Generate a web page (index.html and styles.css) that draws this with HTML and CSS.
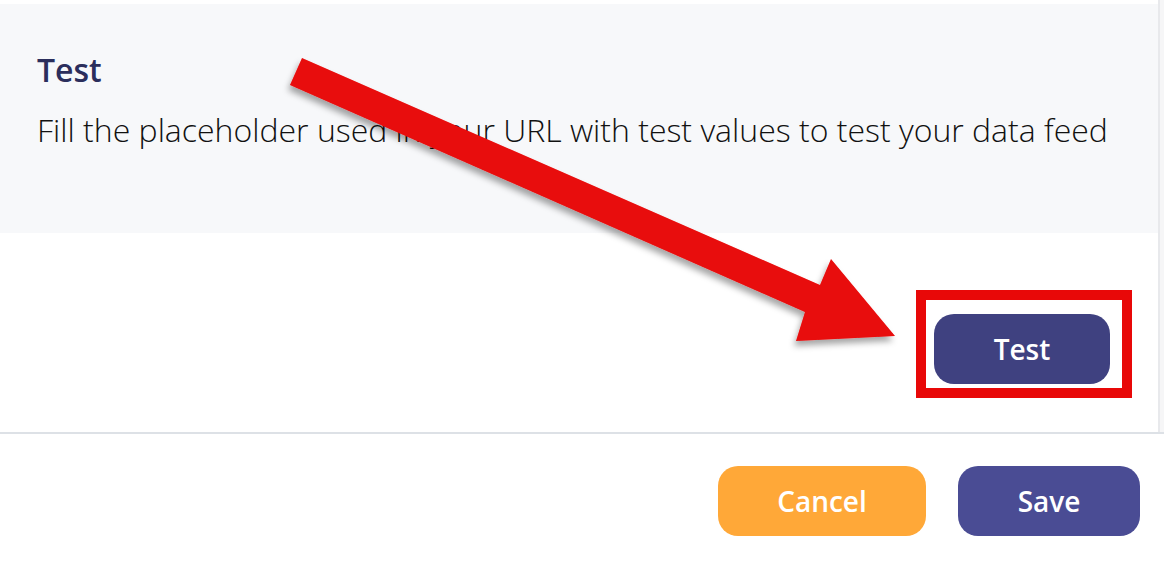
FILE: index.html
```html
<!DOCTYPE html>
<html lang="en">
<head>
<meta charset="utf-8">
<title>Test data feed</title>
<link rel="stylesheet" href="styles.css">
</head>
<body>
<div class="page">
  <div class="scroll">
    <div class="content">
      <section class="panel">
        <h2 class="panel-title">Test</h2>
        <p class="panel-text">Fill the placeholder used in your URL with test values to test your data feed</p>
      </section>
      <div class="test-row">
        <button class="btn btn-test">Test</button>
      </div>
    </div>
    <div class="scrollbar"></div>
  </div>
  <footer class="footer">
    <button class="btn btn-cancel">Cancel</button>
    <button class="btn btn-save">Save</button>
  </footer>

  <div class="highlight"></div>
  <svg class="arrow" width="1164" height="578" viewBox="0 0 1164 578" xmlns="http://www.w3.org/2000/svg">
    <defs>
      <filter id="shadow" x="-10%" y="-10%" width="130%" height="140%">
        <feDropShadow dx="-2" dy="5" stdDeviation="3" flood-color="#000" flood-opacity="0.35"/>
      </filter>
    </defs>
    <polygon filter="url(#shadow)" fill="#e80808" points="302,58 820,285 831,259 895,336 796,341 805,312 290,85"/>
  </svg>
</div>
</body>
</html>
```

FILE: styles.css
```css
* { box-sizing: border-box; }
html, body { margin: 0; padding: 0; background: #ffffff; }
body { font-family: "Open Sans", "Noto Sans", sans-serif; }

.page {
  position: relative;
  width: 1164px;
  height: 578px;
  overflow: hidden;
}

.scroll {
  display: flex;
  height: 434px;
  border-bottom: 2px solid #dde1e6;
}

.content {
  width: 1160px;
  border-right: 2px solid #e8e9ec;
  padding-top: 4px;
  display: flex;
  flex-direction: column;
}

.scrollbar {
  width: 4px;
  background: #f6f6f7;
}

.panel {
  background: #f7f8fa;
  height: 229px;
  padding: 44px 0 0 37px;
}

.panel-title {
  margin: 0;
  font-size: 32px;
  line-height: 44px;
  font-weight: 600;
  color: #2b2e5c;
}

.panel-text {
  margin: 16px 0 0;
  font-size: 32px;
  line-height: 44px;
  font-weight: 300;
  color: #111111;
}

.test-row {
  flex: 1;
  display: flex;
  justify-content: flex-end;
  align-items: flex-start;
  padding: 81px 48px 0 0;
}

.btn {
  border: none;
  height: 70px;
  border-radius: 20px;
  color: #ffffff;
  font-family: "Open Sans", "Noto Sans", sans-serif;
  font-size: 28px;
  font-weight: 600;
  display: flex;
  align-items: center;
  justify-content: center;
  padding: 0;
}

.btn-test { width: 176px; background: #3f4180; }

.footer {
  display: flex;
  justify-content: flex-end;
  gap: 32px;
  padding: 32px 24px 0 0;
}

.btn-cancel { width: 208px; background: #ffa838; }
.btn-save { width: 182px; background: #4a4c94; }

.highlight {
  position: absolute;
  left: 916px;
  top: 290px;
  width: 216px;
  height: 108px;
  border: 10px solid #e80808;
}

.arrow {
  position: absolute;
  left: 0;
  top: 0;
  pointer-events: none;
}
```
